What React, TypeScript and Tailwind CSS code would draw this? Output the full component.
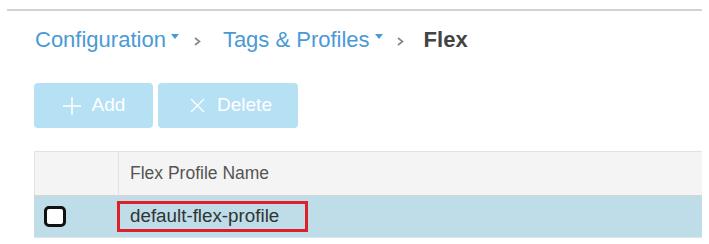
function Caret() {
  return (
    <svg width="8" height="5" viewBox="0 0 8 5" className="ml-[5px] -mt-[8px]">
      <path d="M0 0 H8 L4 5 Z" fill="#4a9ad6" />
    </svg>
  )
}

function Chevron({ last }: { last?: boolean }) {
  return (
    <svg
      width="7"
      height="9"
      viewBox="0 0 7 9"
      className={last ? 'ml-[14px] mr-[20px] mt-[3px]' : 'ml-[15px] mr-[22px] mt-[3px]'}
    >
      <path d="M1 1 L5.5 4.5 L1 8" fill="none" stroke="#888" strokeWidth="1.7" />
    </svg>
  )
}

export default function App() {
  return (
    <div className="w-[709px] h-[244px] bg-white font-['Liberation_Sans',Arial,sans-serif] overflow-hidden">
      <div className="pt-[9px] pl-[7px] pr-[7px]">
        <div className="h-[2px] bg-[#d2d2d2]" />
      </div>

      <div className="pl-[35px] pr-[7px]">
        {/* breadcrumb */}
        <div className="flex items-center h-[22px] mt-[18px] text-[22px] leading-none">
          <span className="text-[#4a9ad6]">Configuration</span>
          <Caret />
          <Chevron />
          <span className="text-[#4a9ad6]">Tags &amp; Profiles</span>
          <Caret />
          <Chevron last />
          <span className="font-bold text-[#444]">Flex</span>
        </div>

        {/* toolbar */}
        <div className="flex gap-[5px] mt-[32px] -ml-[1px]">
          <button className="w-[119px] h-[45px] rounded-[4px] bg-[#b6e0f4] text-white text-[19px] flex items-center justify-center gap-[10px]">
            <svg width="20" height="20" viewBox="0 0 20 20">
              <path d="M10 1 V19 M1 10 H19" stroke="white" strokeWidth="1.5" />
            </svg>
            <span>Add</span>
          </button>
          <button className="w-[140px] h-[45px] rounded-[4px] bg-[#b6e0f4] text-white text-[19px] flex items-center justify-center gap-[12px] pl-[6px]">
            <svg width="15" height="15" viewBox="0 0 15 15">
              <path d="M1 1 L14 14 M14 1 L1 14" stroke="white" strokeWidth="1.4" />
            </svg>
            <span>Delete</span>
          </button>
        </div>

        {/* table */}
        <div className="mt-[23px] -ml-[1px] border-t border-[#e2e2e2]">
          <div className="flex h-[44px] bg-[#f4f4f4] border-b border-[#d6d6d6]">
            <div className="w-[85px] border-l border-r border-[#e2e2e2]" />
            <div className="flex items-center pl-[11px] text-[17.5px] text-[#555]">Flex Profile Name</div>
          </div>
          <div className="flex h-[42px] bg-[#bedde9] border-b border-[#d9e7ee]">
            <div className="w-[85px] flex items-center pl-[10px]">
              <div className="w-[22px] h-[21px] rounded-[5px] border-[3px] border-[#111] bg-white" />
            </div>
            <div className="flex items-center">
              <div className="w-[191px] h-[31px] -ml-[2px] border-[3px] border-[#dd1f2a] flex items-center pl-[10px] text-[18.8px] text-[#333]">
                default-flex-profile
              </div>
            </div>
          </div>
        </div>
      </div>
    </div>
  )
}
